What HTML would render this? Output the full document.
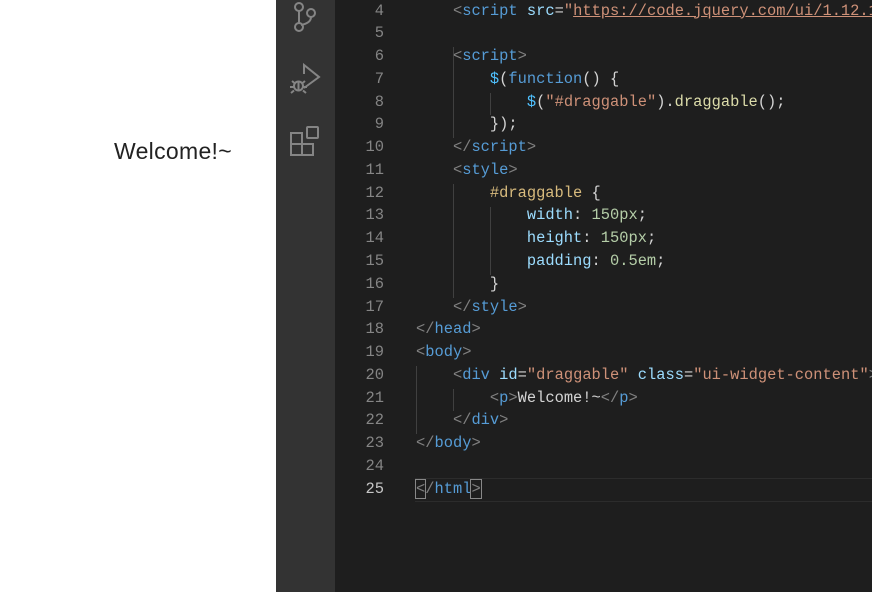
<!DOCTYPE html>
<html><head><style>
body{margin:0;width:872px;height:592px;overflow:hidden;background:#fff;position:relative;font-family:"Liberation Sans",sans-serif}
#w{position:absolute;left:114px;top:138px;font-size:23px;letter-spacing:0.3px;color:#222}
#ab{position:absolute;left:276px;top:0;width:59px;height:592px;background:#333}
#ed{position:absolute;left:335px;top:0;width:537px;height:592px;background:#1e1e1e;font-family:"Liberation Mono",monospace;font-size:15.4px}
.l{position:absolute;left:0;height:22.76px;line-height:22.76px;white-space:pre;width:537px}
.n{position:absolute;right:488px;color:#858585;text-align:right}
.c{position:absolute;left:81px;color:#d4d4d4}
.b{color:#808080}.t{color:#569cd6}.a{color:#9cdcfe}.s{color:#ce9178}.y{color:#d7ba7d}.f{color:#dcdcaa}.d{color:#4fc1ff}
.g{position:absolute;width:1px;background:#404040}
.cur{position:absolute;left:80px;top:478px;width:457px;height:22px;border-top:1px solid #2c2c2c;border-bottom:1px solid #2c2c2c}
.bx{outline:1px solid #888}
</style></head><body>
<div id="w">Welcome!~</div>
<div id="ab">
<svg width="59" height="592" fill="none" stroke="#858585" stroke-width="2">
<circle cx="23" cy="7" r="4"/><circle cx="23" cy="27" r="4"/><circle cx="35" cy="13" r="4"/><path d="M23 11V23M35 17q0 6-10 8"/>
<path d="M28 74V65l15 12-15 11"/><circle cx="22.5" cy="86" r="4.5"/><path d="M16 81l3 2.5M29 81l-3 2.5M14 87h4M27 87h4M15 93l3-2.5M30 93l-3-2.5M22.5 81.5v9"/>
<path d="M15 133h11v22H15zM15 144h22v11H26"/><rect x="31" y="127" width="11" height="11" rx="1"/>
</svg></div>
<div id="ed">
<div class="cur"></div>
<div class="g" style="left:118px;top:47px;height:91px"></div>
<div class="g" style="left:155px;top:93px;height:22px"></div>
<div class="g" style="left:118px;top:184px;height:114px"></div>
<div class="g" style="left:155px;top:207px;height:68px"></div>
<div class="g" style="left:81px;top:366px;height:68px"></div>
<div class="g" style="left:118px;top:389px;height:22px"></div>
<div class="l" style="top:-0.4px"><span class="n">4</span><span class="c">    <span class="b">&lt;</span><span class="t">script</span> <span class="a">src</span>=<span class="s">"<u>https://code.jquery.com/ui/1.12.1</u>"</span></span></div>
<div class="l" style="top:22.4px"><span class="n">5</span></div>
<div class="l" style="top:45.1px"><span class="n">6</span><span class="c">    <span class="b">&lt;</span><span class="t">script</span><span class="b">&gt;</span></span></div>
<div class="l" style="top:67.9px"><span class="n">7</span><span class="c">        <span class="d">$</span>(<span class="t">function</span>() {</span></div>
<div class="l" style="top:90.6px"><span class="n">8</span><span class="c">            <span class="d">$</span>(<span class="s">"#draggable"</span>).<span class="f">draggable</span>();</span></div>
<div class="l" style="top:113.4px"><span class="n">9</span><span class="c">        });</span></div>
<div class="l" style="top:136.2px"><span class="n">10</span><span class="c">    <span class="b">&lt;/</span><span class="t">script</span><span class="b">&gt;</span></span></div>
<div class="l" style="top:158.9px"><span class="n">11</span><span class="c">    <span class="b">&lt;</span><span class="t">style</span><span class="b">&gt;</span></span></div>
<div class="l" style="top:181.7px"><span class="n">12</span><span class="c">        <span class="y">#draggable</span> {</span></div>
<div class="l" style="top:204.4px"><span class="n">13</span><span class="c">            <span class="a">width</span>: <span style="color:#b5cea8">150px</span>;</span></div>
<div class="l" style="top:227.2px"><span class="n">14</span><span class="c">            <span class="a">height</span>: <span style="color:#b5cea8">150px</span>;</span></div>
<div class="l" style="top:250px"><span class="n">15</span><span class="c">            <span class="a">padding</span>: <span style="color:#b5cea8">0.5em</span>;</span></div>
<div class="l" style="top:272.7px"><span class="n">16</span><span class="c">        }</span></div>
<div class="l" style="top:295.5px"><span class="n">17</span><span class="c">    <span class="b">&lt;/</span><span class="t">style</span><span class="b">&gt;</span></span></div>
<div class="l" style="top:318.2px"><span class="n">18</span><span class="c"><span class="b">&lt;/</span><span class="t">head</span><span class="b">&gt;</span></span></div>
<div class="l" style="top:341px"><span class="n">19</span><span class="c"><span class="b">&lt;</span><span class="t">body</span><span class="b">&gt;</span></span></div>
<div class="l" style="top:363.8px"><span class="n">20</span><span class="c">    <span class="b">&lt;</span><span class="t">div</span> <span class="a">id</span>=<span class="s">"draggable"</span> <span class="a">class</span>=<span class="s">"ui-widget-content"</span><span class="b">&gt;</span></span></div>
<div class="l" style="top:386.5px"><span class="n">21</span><span class="c">        <span class="b">&lt;</span><span class="t">p</span><span class="b">&gt;</span>Welcome!~<span class="b">&lt;/</span><span class="t">p</span><span class="b">&gt;</span></span></div>
<div class="l" style="top:409.3px"><span class="n">22</span><span class="c">    <span class="b">&lt;/</span><span class="t">div</span><span class="b">&gt;</span></span></div>
<div class="l" style="top:432px"><span class="n">23</span><span class="c"><span class="b">&lt;/</span><span class="t">body</span><span class="b">&gt;</span></span></div>
<div class="l" style="top:454.8px"><span class="n">24</span></div>
<div class="l" style="top:477.6px"><span class="n" style="color:#c6c6c6">25</span><span class="c"><span class="b bx">&lt;</span><span class="b">/</span><span class="t">html</span><span class="b bx">&gt;</span></span></div>
</div>
</body></html>
